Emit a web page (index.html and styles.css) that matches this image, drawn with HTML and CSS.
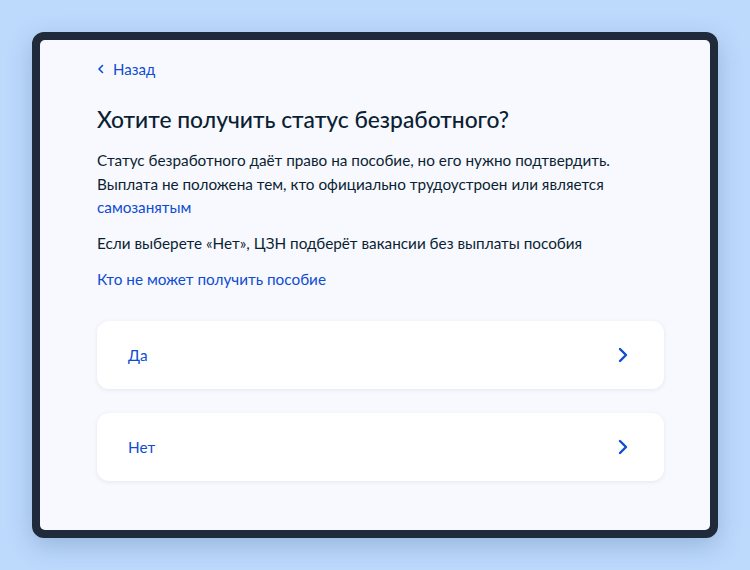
FILE: index.html
```html
<!DOCTYPE html>
<html lang="ru">
<head>
    <meta charset="UTF-8">
    <title>Статус безработного</title>
    <link rel="stylesheet" href="styles.css">
</head>
<body>
    <div class="window">
        <div class="screen">
            <a href="#" class="back-link">
                <svg width="8" height="10" viewBox="0 0 8 10"><path d="M5.5 1.5 L2 5 L5.5 8.5" fill="none" stroke="#0d4cd3" stroke-width="1.6" stroke-linecap="round" stroke-linejoin="round"/></svg>
                Назад
            </a>

            <h1>Хотите получить статус безработного?</h1>

            <p class="text">Статус безработного даёт право на пособие, но его нужно подтвердить. Выплата не положена тем, кто официально трудоустроен или является <a href="#">самозанятым</a></p>
            <p class="text">Если выберете «Нет», ЦЗН подберёт вакансии без выплаты пособия</p>
            <p class="text"><a href="#">Кто не может получить пособие</a></p>

            <div class="options">
                <a href="#" class="option">
                    <span>Да</span>
                    <svg width="12" height="16" viewBox="0 0 12 16"><path d="M3 2 L9 8 L3 14" fill="none" stroke="#0d4cd3" stroke-width="2.4" stroke-linecap="round" stroke-linejoin="round"/></svg>
                </a>
                <a href="#" class="option">
                    <span>Нет</span>
                    <svg width="12" height="16" viewBox="0 0 12 16"><path d="M3 2 L9 8 L3 14" fill="none" stroke="#0d4cd3" stroke-width="2.4" stroke-linecap="round" stroke-linejoin="round"/></svg>
                </a>
            </div>
        </div>
    </div>
</body>
</html>
```

FILE: styles.css
```css
body {
    margin: 0;
    padding: 32px;
    background-color: #bddafd;
    font-family: Lato, "Noto Sans", sans-serif;
    color: #0b1f33;
}

.window {
    width: 686px;
    height: 506px;
    box-sizing: border-box;
    border: 8px solid #1f2a3a;
    border-radius: 12px;
    background-color: #1f2a3a;
    box-shadow: 0 8px 24px rgba(40, 70, 120, 0.25);
}

.screen {
    height: 100%;
    box-sizing: border-box;
    padding: 18px 46px 0 57px;
    background-color: #f8f9fe;
    border-radius: 5px;
}

a {
    color: #0d4cd3;
    text-decoration: none;
}

.back-link {
    display: inline-flex;
    align-items: center;
    gap: 8px;
    font-size: 15px;
    line-height: 20px;
}

h1 {
    margin: 25px 0 15px;
    font-size: 22.8px;
    line-height: 30px;
    font-weight: 500;
}

.text {
    max-width: 540px;
    margin: 0 0 12.5px;
    font-size: 15.3px;
    line-height: 23.5px;
}

.options {
    margin-top: 29px;
    display: flex;
    flex-direction: column;
    gap: 24px;
}

.option {
    display: flex;
    justify-content: space-between;
    align-items: center;
    height: 68px;
    padding: 0 35px 0 31px;
    background-color: white;
    border-radius: 12px;
    box-shadow: 0 1px 4px rgba(70, 100, 160, 0.12);
    font-size: 15.3px;
}
```
